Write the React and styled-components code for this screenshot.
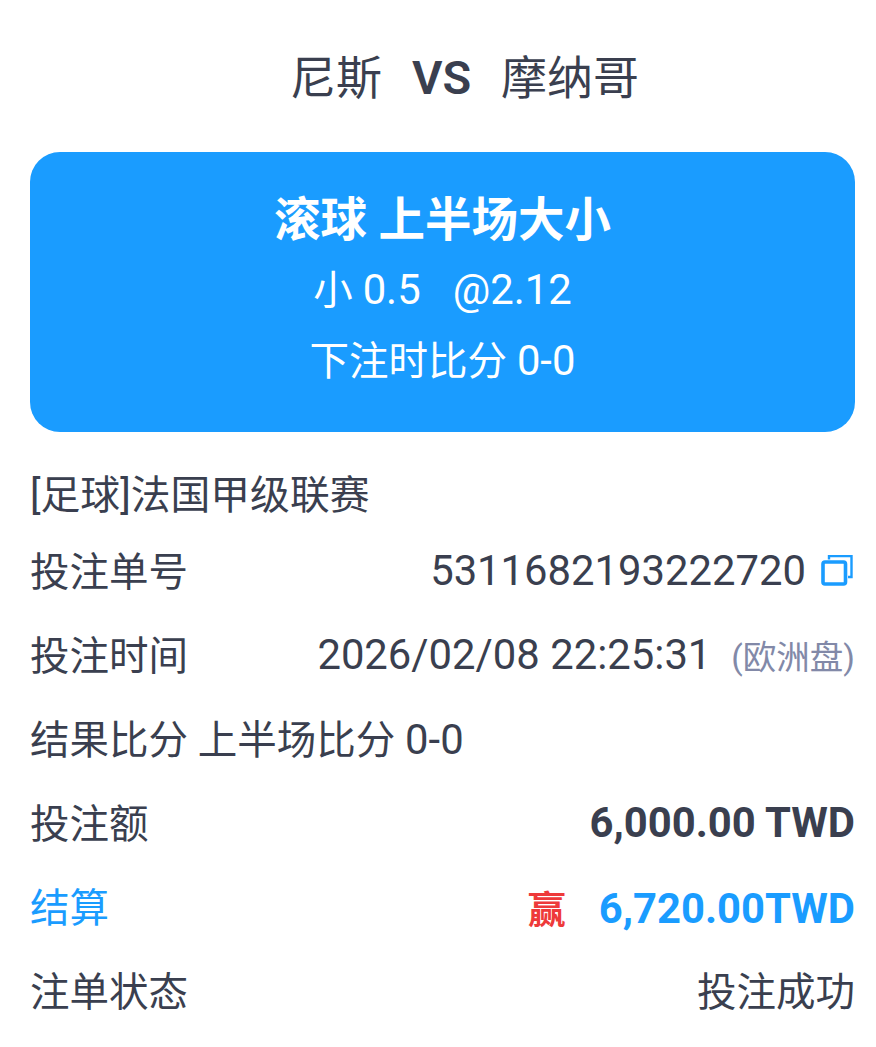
import React from 'react';
import styled, {createGlobalStyle} from "styled-components";

const GlobalStyle = createGlobalStyle`
  html, body {
    margin: 0;
    background: #fff;
    font-family: Roboto, "Noto Sans CJK SC", sans-serif;
  }
`

const CopyIcon = () => (
    <svg width="32" height="31" viewBox="0 0 32 31" fill="none" stroke="#1a9cff">
        <path d="M8 4.5V1h22.5v21h-3.5" strokeWidth="2.4"/>
        <rect x="2" y="7" width="22.5" height="22" rx="2" strokeWidth="3.6"/>
    </svg>
)

const App = () => {
    return (
        <Page>
            <GlobalStyle/>
            <Match>尼斯<Versus>VS</Versus>摩纳哥</Match>
            <Card>
                <CardTitle>滚球 上半场大小</CardTitle>
                <CardLine $first>小&nbsp;<Num>0.5</Num><Odds><Num>@2.12</Num></Odds></CardLine>
                <CardLine>下注时比分 <Num>0-0</Num></CardLine>
            </Card>
            <League>[足球]法国甲级联赛</League>
            <Rows>
                <Row>
                    <span>投注单号</span>
                    <Value><Num>5311682193222720</Num><CopyWrap><CopyIcon/></CopyWrap></Value>
                </Row>
                <Row>
                    <span>投注时间</span>
                    <Value><Num>2026/02/08 22:25:31</Num><Market>(欧洲盘)</Market></Value>
                </Row>
                <Row>
                    <span>结果比分 上半场比分 <Num>0-0</Num></span>
                </Row>
                <Row>
                    <span>投注额</span>
                    <Amount>6,000.00 TWD</Amount>
                </Row>
                <Row $blue>
                    <span>结算</span>
                    <Value>
                        <Win>赢</Win>
                        <Amount $blue>6,720.00TWD</Amount>
                    </Value>
                </Row>
                <Row>
                    <span>注单状态</span>
                    <span>投注成功</span>
                </Row>
            </Rows>
        </Page>
    );
};

const Page = styled.div`
  width: 876px;
  height: 1047px;
  box-sizing: border-box;
  padding: 50px 21px 0 30px;
  color: #3a3f4f;
  overflow: hidden;
`

const Match = styled.div`
  display: flex;
  justify-content: center;
  align-items: center;
  height: 56px;
  padding-left: 44px;
  font-size: 46px;
  line-height: 56px;
`

const Versus = styled.span`
  margin: 0 30px;
  font-weight: 600;
  font-size: 47px;
`

const Card = styled.div`
  display: flex;
  flex-direction: column;
  align-items: center;
  height: 280px;
  box-sizing: border-box;
  margin-top: 46px;
  padding-top: 40px;
  border-radius: 30px;
  background-color: #1a9cff;
  color: #fff;
`

const CardTitle = styled.div`
  font-size: 46.5px;
  font-weight: 700;
  line-height: 56px;
`

const CardLine = styled.div`
  display: flex;
  align-items: baseline;
  margin-top: ${({$first}) => ($first ? "18px" : "22px")};
  font-size: 39.5px;
  line-height: 48px;
  white-space: pre;
`

const Num = styled.span`
  font-size: 41.8px;
`

const Odds = styled.span`
  margin-left: 32px;
`

const League = styled.div`
  margin-top: 40px;
  font-size: 39.8px;
  line-height: 48px;
`

const Rows = styled.div`
  display: flex;
  flex-direction: column;
  margin-top: 6px;
`

const Row = styled.div`
  display: flex;
  justify-content: space-between;
  align-items: center;
  height: 84px;
  font-size: 39.5px;
  color: ${({$blue}) => ($blue ? "#1a9cff" : "inherit")};
`

const Value = styled.div`
  display: flex;
  align-items: center;
  padding-top: 4px;
`

const CopyWrap = styled.span`
  display: flex;
  margin: 0 2px 0 15px;
`

const Market = styled.span`
  margin-left: 20px;
  font-size: 33.5px;
  color: #8289a8;
`

const Amount = styled.span`
  padding-top: 4px;
  font-size: 41.8px;
  font-weight: 700;
  color: ${({$blue}) => ($blue ? "#1a9cff" : "inherit")};
`

const Win = styled.span`
  margin-right: 33px;
  font-size: 38px;
  font-weight: 700;
  color: #ee3a3a;
`

export default App;
